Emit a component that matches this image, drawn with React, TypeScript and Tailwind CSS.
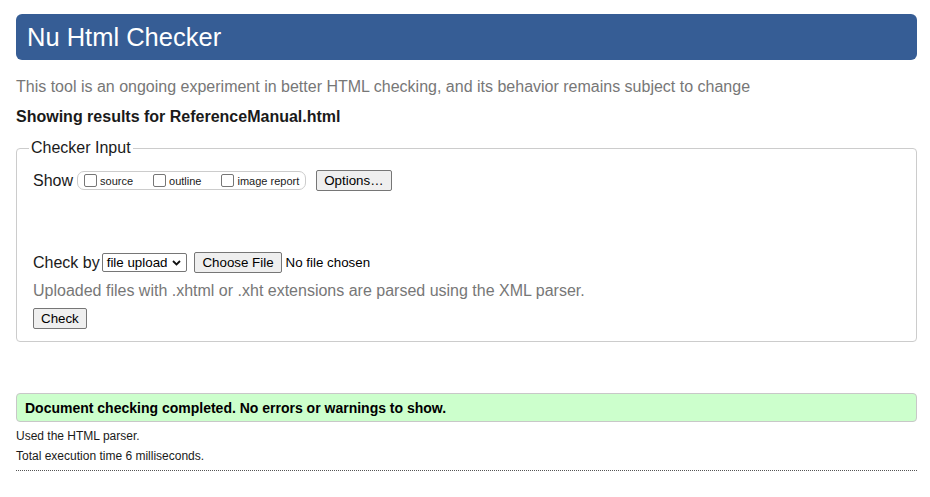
import React from "react";

function Box() {
  return <span className="inline-block w-[13px] h-[13px] border border-[#767676] rounded-[2px] bg-white shrink-0" />;
}

function Btn({ children, className = "" }: { children: React.ReactNode; className?: string }) {
  return (
    <span
      className={
        "inline-flex items-center justify-center h-[21px] px-[7px] border border-[#767676] rounded-[2px] bg-[#efefef] text-[13.33px] leading-[15px] text-black " +
        className
      }
    >
      {children}
    </span>
  );
}

export default function App() {
  return (
    <div className="min-h-[497px] bg-white pl-[16px] pr-[13px] pt-[14px] font-['Liberation_Sans',Arial,sans-serif] text-[#1a1a1a]">
      <div className="h-[46px] rounded-[6px] bg-[#365d95] pl-[11px] flex items-center">
        <h1 className="text-[25.5px] leading-[30px] text-white font-normal">Nu Html Checker</h1>
      </div>

      <p className="mt-[18px] text-[16px] leading-[18px] text-[#777]">
        This tool is an ongoing experiment in better HTML checking, and its behavior remains subject to change
      </p>

      <p className="mt-[12px] text-[16px] leading-[18px] font-bold text-[#1a1a1a]">
        Showing results for ReferenceManual.html
      </p>

      <fieldset className="mt-[13px] border border-[#cccccc] rounded-[4px] px-[16px] pb-[12px] pt-0">
        <legend className="ml-[-4px] px-[2px] text-[16px] leading-[18px]">Checker Input</legend>

        <div className="pt-[13px] flex items-center h-[34px] box-border">
          <span className="text-[16px] leading-[18px]">Show</span>
          <span className="ml-[4px] inline-flex items-center h-[19px] border border-[#cccccc] rounded-[7px] pl-[6px] pr-[6px] gap-[20px]">
            <label className="flex items-center">
              <Box />
              <span className="ml-[3px] text-[11px] leading-[13px] mt-[2px]">source</span>
            </label>
            <label className="flex items-center">
              <Box />
              <span className="ml-[3px] text-[11px] leading-[13px] mt-[2px]">outline</span>
            </label>
            <label className="flex items-center">
              <Box />
              <span className="ml-[3px] text-[11px] leading-[13px] mt-[2px]">image report</span>
            </label>
          </span>
          <Btn className="ml-[10px]">Options…</Btn>
        </div>

        <div className="mt-[61px] flex items-center h-[21px]">
          <span className="text-[16px] leading-[18px]">Check by</span>
          <span className="ml-[2px] inline-flex items-center h-[19px] border border-[#767676] rounded-[2px] bg-white pl-[4px] pr-[5px] text-[13.33px] leading-[15px] text-black">
            file upload
            <svg className="ml-[5px]" width="9" height="6" viewBox="0 0 9 6">
              <path d="M1 1l3.5 3.5L8 1" fill="none" stroke="#111" strokeWidth="1.8" />
            </svg>
          </span>
          <Btn className="ml-[7px]">Choose File</Btn>
          <span className="ml-[4px] text-[13.33px] leading-[15px] text-black">No file chosen</span>
        </div>

        <p className="mt-[9px] text-[16px] leading-[18px] text-[#777]">
          Uploaded files with .xhtml or .xht extensions are parsed using the XML parser.
        </p>

        <div className="mt-[8px] flex">
          <Btn>Check</Btn>
        </div>
      </fieldset>

      <div className="mt-[51px] h-[29px] border border-[#c8c8c8] rounded-[4px] bg-[#ccffcc] pl-[8px] flex items-center">
        <span className="text-[14px] leading-[16px] font-bold text-black">
          Document checking completed. No errors or warnings to show.
        </span>
      </div>

      <p className="mt-[7px] text-[12px] leading-[14px]">Used the HTML parser.</p>
      <p className="mt-[6px] text-[12px] leading-[14px]">Total execution time 6 milliseconds.</p>
      <div className="mt-[7px] border-t border-dotted border-[#555]" />
    </div>
  );
}
